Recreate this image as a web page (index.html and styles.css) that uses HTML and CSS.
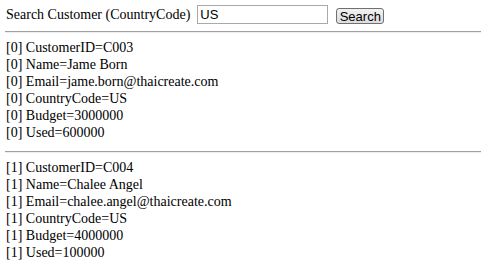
FILE: index.html
```html
<!DOCTYPE html>
<html lang="en">
<head>
    <meta charset="UTF-8">
    <title>Search Customer</title>
    <link rel="stylesheet" href="styles.css">
</head>
<body>
    <form class="search" name="frmSearch" method="get">
        <label class="label" for="txtKeyword">Search Customer (CountryCode)</label>
        <input type="text" id="txtKeyword" name="txtKeyword" value="US">
        <input type="submit" value="Search">
    </form>
    <hr>
    <div class="record">
        [0] CustomerID=C003<br>
        [0] Name=Jame Born<br>
        [0] Email=jame.born@thaicreate.com<br>
        [0] CountryCode=US<br>
        [0] Budget=3000000<br>
        [0] Used=600000
    </div>
    <hr>
    <div class="record">
        [1] CustomerID=C004<br>
        [1] Name=Chalee Angel<br>
        [1] Email=chalee.angel@thaicreate.com<br>
        [1] CountryCode=US<br>
        [1] Budget=4000000<br>
        [1] Used=100000
    </div>
</body>
</html>
```
FILE: styles.css
```css
body {
    font-family: "Liberation Serif", "Times New Roman", serif;
    font-size: 14px;
    line-height: 17px;
    color: #000;
    background: #fff;
    margin: 0;
    padding: 5px 10px 0 5px;
}

.search {
    display: flex;
    align-items: center;
    height: 19px;
    margin: 0;
}

.label {
    padding-left: 1px;
    margin-right: 7px;
}

input[type="text"] {
    font-family: "Liberation Sans", Arial, sans-serif;
    font-size: 13px;
    width: 131px;
    height: 19px;
    box-sizing: border-box;
    border: 1px solid #a9a9a9;
    padding: 1px 2px;
    margin: 0 8px 0 0;
}

input[type="submit"] {
    font-family: "Liberation Sans", Arial, sans-serif;
    font-size: 13px;
    width: 48px;
    height: 16px;
    box-sizing: border-box;
    padding: 0;
    margin: 2px 0 0 0;
    border: 1px solid #707070;
    border-radius: 3px;
    background: linear-gradient(#f2f2f2, #dddddd);
    color: #000;
}

hr {
    border: none;
    border-top: 1px solid #a0a0a0;
    border-bottom: 1px solid #eeeeee;
    margin: 7px 0 6px 0;
}

.record {
    padding-left: 1px;
}

.record + hr {
    margin: 10px 0 6px 0;
}
```
